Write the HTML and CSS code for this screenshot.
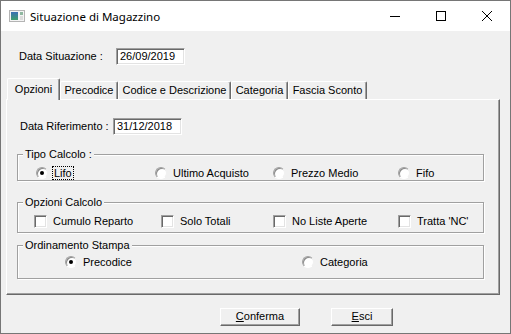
FILE: index.html
```html
<!DOCTYPE html>
<html lang="it">
<head>
    <meta charset="UTF-8">
    <title>Situazione di Magazzino</title>
    <link rel="stylesheet" href="styles.css">
</head>
<body>

<div class="window">
    <div class="titlebar">
        <svg class="app-icon" width="16" height="12" viewBox="0 0 16 12">
            <defs>
                <linearGradient id="ig" x1="0" y1="0" x2="0" y2="1">
                    <stop offset="0" stop-color="#3a6fb4"/>
                    <stop offset="1" stop-color="#3f9e6b"/>
                </linearGradient>
            </defs>
            <rect x="0.5" y="0.5" width="15" height="11" fill="#f4f4f4" stroke="#b4b4b4"/>
            <rect x="2" y="2" width="7" height="8" fill="url(#ig)"/>
            <rect x="11" y="2" width="3" height="3" fill="#8fb7a0"/>
            <rect x="11" y="6" width="3" height="4" fill="#dcdcdc"/>
        </svg>
        <span class="title">Situazione di Magazzino</span>
        <div class="caption">
            <div class="cap-btn">
                <svg width="10" height="10" viewBox="0 0 10 10"><path d="M0 5.5H10" stroke="#000" stroke-width="1"/></svg>
            </div>
            <div class="cap-btn">
                <svg width="10" height="10" viewBox="0 0 10 10"><rect x="0.5" y="0.5" width="9" height="9" fill="none" stroke="#000"/></svg>
            </div>
            <div class="cap-btn">
                <svg width="10" height="10" viewBox="0 0 10 10"><path d="M0 0L10 10M10 0L0 10" stroke="#000" stroke-width="1"/></svg>
            </div>
        </div>
    </div>

    <div class="client">
        <div class="field-row top-row">
            <span class="lbl lbl-situazione">Data Situazione :</span>
            <div class="edit">26/09/2019</div>
        </div>

        <div class="tabs">
            <div class="tab active t-opzioni">Opzioni</div>
            <div class="tab t-precodice">Precodice</div>
            <div class="tab t-codice">Codice e Descrizione</div>
            <div class="tab t-categoria">Categoria</div>
            <div class="tab t-fascia">Fascia Sconto</div>
        </div>

        <div class="tab-panel">
            <div class="field-row rif-row">
                <span class="lbl lbl-riferimento">Data Riferimento :</span>
                <div class="edit">31/12/2018</div>
            </div>

            <fieldset class="group g-tipo">
                <legend>Tipo Calcolo :</legend>
                <div class="opts">
                    <div class="opt"><span class="radio checked"></span><span class="opt-lbl focus">Lifo</span></div>
                    <div class="opt"><span class="radio"></span><span class="opt-lbl">Ultimo Acquisto</span></div>
                    <div class="opt"><span class="radio"></span><span class="opt-lbl">Prezzo Medio</span></div>
                    <div class="opt"><span class="radio"></span><span class="opt-lbl">Fifo</span></div>
                </div>
            </fieldset>

            <fieldset class="group g-opzioni">
                <legend>Opzioni Calcolo</legend>
                <div class="opts">
                    <div class="opt"><span class="check"></span><span class="opt-lbl">Cumulo Reparto</span></div>
                    <div class="opt"><span class="check"></span><span class="opt-lbl">Solo Totali</span></div>
                    <div class="opt"><span class="check"></span><span class="opt-lbl">No Liste Aperte</span></div>
                    <div class="opt"><span class="check"></span><span class="opt-lbl">Tratta 'NC'</span></div>
                </div>
            </fieldset>

            <fieldset class="group g-ordinamento">
                <legend>Ordinamento Stampa</legend>
                <div class="opts">
                    <div class="opt"><span class="radio checked"></span><span class="opt-lbl">Precodice</span></div>
                    <div class="opt"><span class="radio"></span><span class="opt-lbl">Categoria</span></div>
                </div>
            </fieldset>
        </div>

        <div class="buttons">
            <div class="btn btn-conferma"><u>C</u>onferma</div>
            <div class="btn btn-esci"><u>E</u>sci</div>
        </div>
    </div>
</div>

</body>
</html>
```

FILE: styles.css
```css
* { margin: 0; padding: 0; box-sizing: border-box; }
body { background: #fff; font-family: "Liberation Sans", Arial, sans-serif; font-size: 11px; color: #000; }

.window { width: 511px; height: 334px; border: 1px solid #767676; background: #f0f0f0; display: flex; flex-direction: column; }

/* title bar */
.titlebar { height: 30px; background: #fff; display: flex; align-items: center; flex-shrink: 0; }
.app-icon { margin-left: 8px; display: block; }
.title { margin-left: 5px; font-family: "Noto Sans", "Open Sans", sans-serif; font-size: 11.5px; color: #000; }
.caption { margin-left: auto; display: flex; }
.cap-btn { width: 46px; height: 30px; display: flex; align-items: center; justify-content: center; }
.cap-btn svg { display: block; shape-rendering: crispEdges; }
.cap-btn:last-child svg { shape-rendering: auto; }

/* client area */
.client { flex: 1; }
.field-row { display: flex; align-items: center; }
.top-row { padding: 17px 0 0 18px; }
.lbl { line-height: 13px; }
.lbl-situazione { width: 97px; }
.lbl-riferimento { width: 93px; }

.edit { width: 69px; height: 17px; background: #fff; border: 1px solid; border-color: #a0a0a0 #fff #fff #a0a0a0; box-shadow: inset 1px 1px 0 #696969, inset -1px -1px 0 #e3e3e3; padding: 0 3px; line-height: 15px; white-space: nowrap; }

/* tabs */
.tabs { display: flex; align-items: flex-end; height: 21px; margin: 13px 0 0 6px; }
.tab { height: 18px; padding-top: 2px; line-height: 13px; text-align: center; white-space: nowrap; border-top: 1px solid #fff; border-left: 1px solid #fff; border-right: 1px solid #696969; box-shadow: inset -1px 0 0 #a0a0a0; border-radius: 2px 2px 0 0; }
.tab.active { height: 22px; margin-bottom: -1px; padding-top: 4px; background: #f0f0f0; position: relative; z-index: 1; }
.t-opzioni { width: 53px; }
.t-precodice { width: 58px; }
.t-codice { width: 113px; }
.t-categoria { width: 57px; }
.t-fascia { width: 79px; }

.tab-panel { width: 494px; height: 196px; margin-left: 5px; padding: 18px 0 0 10px; border-top: 1px solid #fff; border-left: 1px solid #fff; border-right: 1px solid #696969; border-bottom: 1px solid #696969; box-shadow: inset -1px -1px 0 #a0a0a0; }
.rif-row { margin-left: 3px; }

/* group boxes */
.group { width: 467px; border: 1px solid #a0a0a0; box-shadow: inset 1px 1px 0 #fff, 1px 1px 0 #fff; }
.group legend { margin-left: 5px; padding: 0 2px; line-height: 13px; background: #f0f0f0; }
.opts { display: grid; align-items: center; }

.g-tipo { margin-top: 13px; }
.g-tipo .opts { grid-template-columns: 119px 118px 125px auto; padding: 5px 0 0 18px; }
.g-opzioni { margin-top: 15px; }
.g-opzioni .opts { grid-template-columns: 127px 112px 125px auto; padding: 5px 0 4px 16px; }
.g-ordinamento { margin-top: 6px; }
.g-ordinamento .opts { grid-template-columns: 237px auto; padding: 3px 0 9px 47px; }

.opt { display: flex; align-items: center; height: 14px; }
.opt-lbl { margin-left: 4px; padding: 0 1px; border: 1px solid transparent; line-height: 12px; white-space: nowrap; }
.opt-lbl.focus { border: 1px dotted #000; }

.radio { width: 12px; height: 12px; border-radius: 50%; background: #fff; border: 1px solid; border-color: #a0a0a0 #f0f0f0 #fff #a0a0a0; box-shadow: inset 1px 1px 0 #8a8a8a; display: flex; align-items: center; justify-content: center; flex-shrink: 0; }
.radio.checked::after { content: ""; width: 4px; height: 4px; border-radius: 50%; background: #000; }

.check { width: 13px; height: 13px; background: #fff; border: 1px solid; border-color: #a0a0a0 #fff #fff #a0a0a0; box-shadow: inset 1px 1px 0 #696969, inset -1px -1px 0 #e3e3e3; flex-shrink: 0; }

/* bottom buttons */
.buttons { display: flex; gap: 31px; margin-top: 13px; padding-left: 219px; }
.btn { height: 18px; line-height: 15px; text-align: center; background: #f0f0f0; border: 1px solid; border-color: #fff #696969 #696969 #fff; box-shadow: inset -1px -1px 0 #a0a0a0; }
.btn-conferma { width: 80px; }
.btn-esci { width: 62px; }
```
